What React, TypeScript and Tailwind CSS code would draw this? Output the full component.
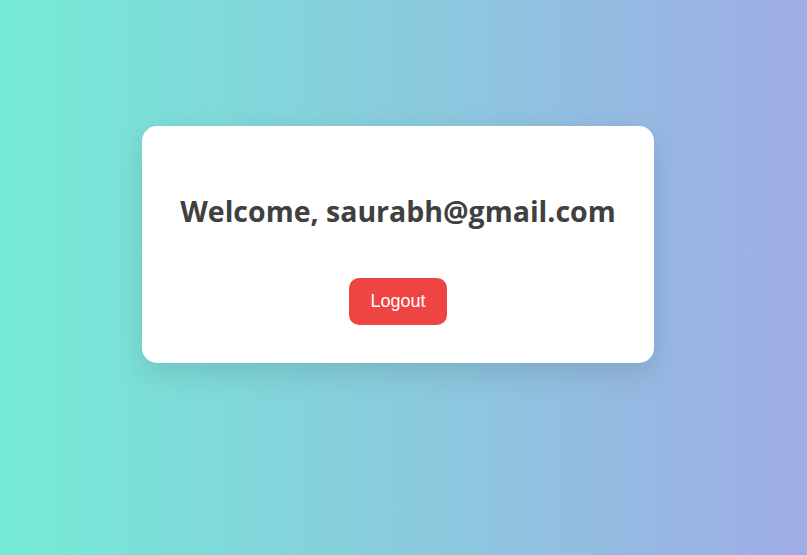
export default function App() {
  return (
    <div className="min-h-[555px] w-full bg-[linear-gradient(to_right,#74ebd5,#9face6)] pl-[142px] pt-[126px] font-['Liberation_Sans',Arial,sans-serif]">
      <div className="flex w-[512px] flex-col items-center rounded-[15px] bg-white pt-[63px] pb-[38px] shadow-[0_10px_30px_rgba(0,0,0,0.12)]">
        <h2 className="font-['Open_Sans','Noto_Sans',sans-serif] text-[28.5px] leading-[44px] font-bold text-[#404040]">
          Welcome, saurabh@gmail.com
        </h2>
        <button className="mt-[45px] rounded-[10px] bg-[#ef4444] px-[21px] py-[13px] text-[18px] leading-[21px] text-white">
          Logout
        </button>
      </div>
    </div>
  );
}
